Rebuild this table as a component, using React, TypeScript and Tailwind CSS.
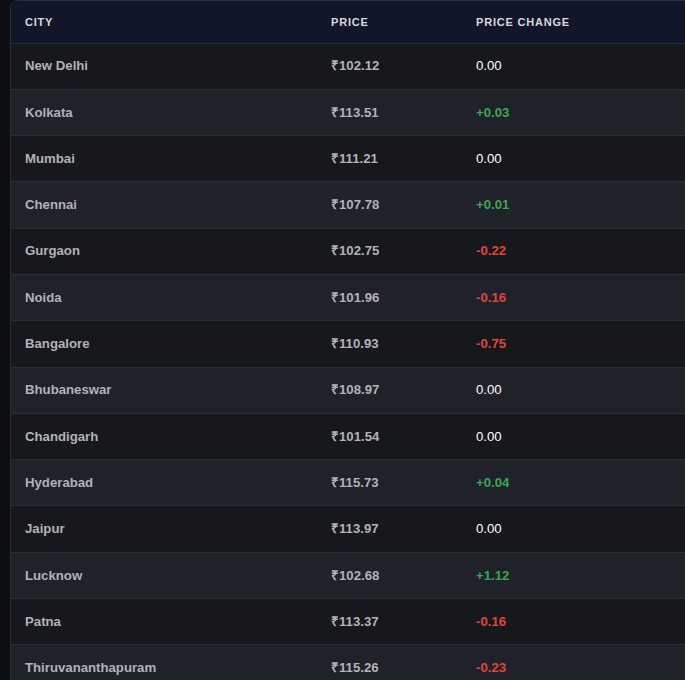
const rows: { city: string; price: string; change: string }[] = [
  { city: 'New Delhi', price: '102.12', change: '0.00' },
  { city: 'Kolkata', price: '113.51', change: '+0.03' },
  { city: 'Mumbai', price: '111.21', change: '0.00' },
  { city: 'Chennai', price: '107.78', change: '+0.01' },
  { city: 'Gurgaon', price: '102.75', change: '-0.22' },
  { city: 'Noida', price: '101.96', change: '-0.16' },
  { city: 'Bangalore', price: '110.93', change: '-0.75' },
  { city: 'Bhubaneswar', price: '108.97', change: '0.00' },
  { city: 'Chandigarh', price: '101.54', change: '0.00' },
  { city: 'Hyderabad', price: '115.73', change: '+0.04' },
  { city: 'Jaipur', price: '113.97', change: '0.00' },
  { city: 'Lucknow', price: '102.68', change: '+1.12' },
  { city: 'Patna', price: '113.37', change: '-0.16' },
  { city: 'Thiruvananthapuram', price: '115.26', change: '-0.23' },
];

function changeClass(v: string) {
  if (v.startsWith('+')) return 'text-[#3fa35a] font-bold';
  if (v.startsWith('-')) return 'text-[#e0443f] font-bold';
  return 'text-white';
}

export default function App() {
  return (
    <div className="min-h-screen bg-[#0c0e11] pl-[10px] overflow-hidden font-['Liberation_Sans',Arial,sans-serif]">
      <div className="w-[720px] rounded-t-lg border border-[#23303a] overflow-hidden">
        <table className="w-full border-collapse table-fixed text-left">
          <thead>
            <tr className="bg-[#111729] border-b border-[#23303a]">
              <th className="w-[305px] h-[42px] pl-[14px] text-[11px] font-bold uppercase tracking-[0.8px] text-[#d6d9de]">City</th>
              <th className="w-[145px] pl-[15px] text-[11px] font-bold uppercase tracking-[0.8px] text-[#d6d9de]">Price</th>
              <th className="pl-[15px] text-[11px] font-bold uppercase tracking-[0.8px] text-[#d6d9de]">Price Change</th>
            </tr>
          </thead>
          <tbody>
            {rows.map((r, i) => (
              <tr
                key={r.city}
                className={`border-b border-[#23303a] ${i % 2 === 0 ? 'bg-[#16181c]' : 'bg-[#1f2228]'}`}
              >
                <td className="h-[46.3px] pl-[14px] text-[13.2px] font-bold text-[#b0b3b8]">{r.city}</td>
                <td className="pl-[15px] text-[13.2px] font-bold text-[#b0b3b8]">₹{r.price}</td>
                <td className={`pl-[15px] text-[13.2px] ${changeClass(r.change)}`}>{r.change}</td>
              </tr>
            ))}
          </tbody>
        </table>
      </div>
    </div>
  );
}
